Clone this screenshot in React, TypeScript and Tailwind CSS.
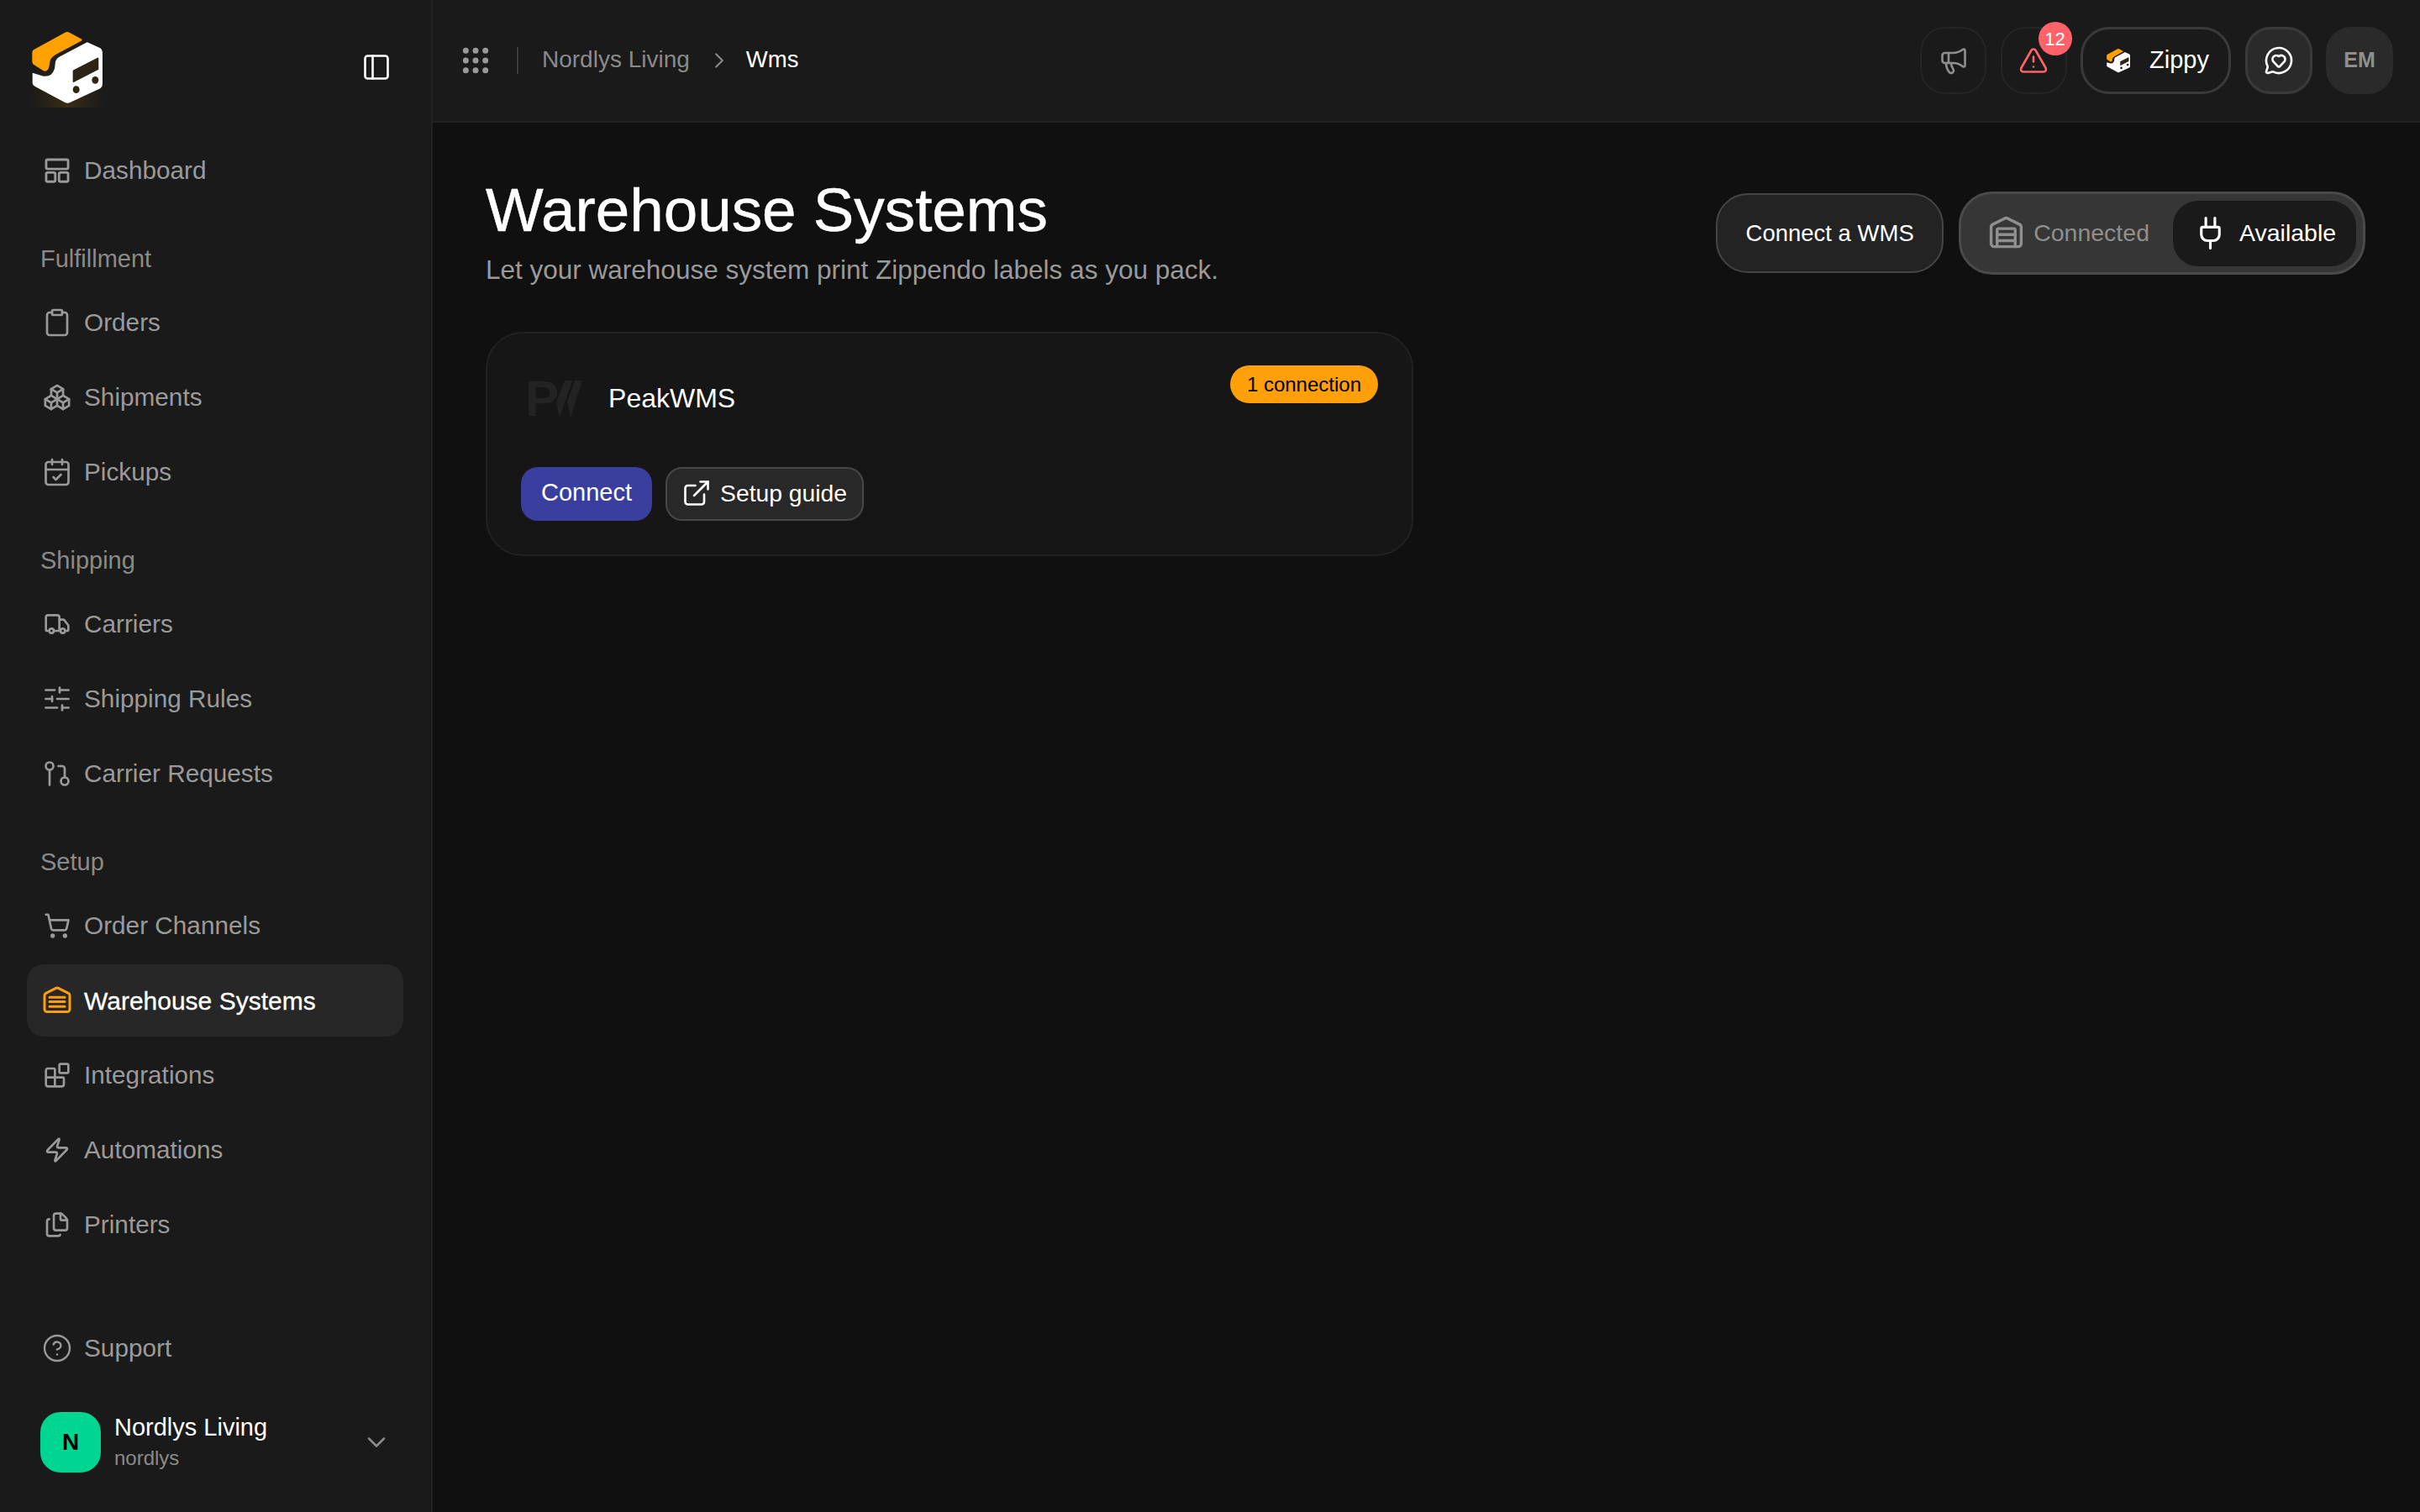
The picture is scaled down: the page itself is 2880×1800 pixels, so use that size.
import React from 'react';
import {
  Blocks,
  CalendarCheck,
  ChevronDown,
  ChevronRight,
  CircleHelp,
  Clipboard,
  ExternalLink,
  Files,
  GitPullRequest,
  Grip,
  Megaphone,
  MessageCircleHeart,
  PanelLeft,
  Plug,
  ShoppingCart,
  SlidersHorizontal,
  TriangleAlert,
  Truck,
  Warehouse,
  Zap,
} from 'lucide-react';
import { TbPackages } from 'react-icons/tb';

const Logo = ({ className }: { className: string }) => (
  <svg viewBox="36 36 288 288" className={className}>
    <path
      d="M60 118 L172 56 Q180 52 188 56 L232 80 Q234 84 230 86 L140 134 Q120 146 118 160 L116 175 Q112 198 95 193 L62 172 Q55 168 55 160 L55 128 Q55 121 60 118Z"
      fill="#ffa200"
    />
    <path
      d="M255 92 L298 112 Q306 118 306 126 L306 240 Q306 250 298 256 L190 306 Q182 310 172 306 L64 248 Q56 244 56 236 L56 200 L95 212 Q125 216 135 185 L138 160 Q140 150 150 144 L248 92 Q252 90 255 92Z"
      fill="#ffffff"
    />
    <path d="M203 190 L288 146 Q292 145 292 149 L292 188 L203 234 Q200 235 200 232 L200 194 Q200 191 203 190Z" fill="#2c2415" />
    <ellipse cx="212" cy="260" rx="12" ry="13" fill="#2c2415" />
    <ellipse cx="280" cy="226" rx="12" ry="13" fill="#2c2415" />
  </svg>
);

const DashboardIcon = ({ className }: { className: string }) => (
  <svg viewBox="0 0 24 24" fill="none" stroke="currentColor" strokeWidth="1.9" className={className}>
    <rect x="3.3" y="3.3" width="17.4" height="7.4" rx="1.2" />
    <rect x="3.3" y="13.6" width="7.2" height="7.2" rx="1.2" />
    <rect x="13.5" y="13.6" width="7.2" height="7.2" rx="1.2" />
  </svg>
);

const WarehouseLinesIcon = ({ className }: { className: string }) => (
  <svg viewBox="0 0 24 24" fill="none" stroke="currentColor" strokeWidth="2" strokeLinecap="round" strokeLinejoin="round" className={className}>
    <path d="M22 19a2 2 0 0 1-2 2H4a2 2 0 0 1-2-2V8a2 2 0 0 1 1.132-1.803l7.95-3.974a2 2 0 0 1 1.837 0l7.95 3.974A2 2 0 0 1 22 8z" />
    <path d="M6 9.5h12" />
    <path d="M6 13h12" />
    <path d="M6 16.8h12" />
  </svg>
);

const big = 'w-9 h-9';
const small = 'w-8 h-8';

const sections = [
  {
    label: null,
    items: [{ name: 'Dashboard', icon: <DashboardIcon className={big} /> }],
  },
  {
    label: 'Fulfillment',
    items: [
      { name: 'Orders', icon: <Clipboard className={big} strokeWidth={1.8} /> },
      { name: 'Shipments', icon: <TbPackages className="w-[34px] h-[34px]" strokeWidth={1.9} /> },
      { name: 'Pickups', icon: <CalendarCheck className={big} strokeWidth={1.8} /> },
    ],
  },
  {
    label: 'Shipping',
    items: [
      { name: 'Carriers', icon: <Truck className={small} strokeWidth={2} /> },
      { name: 'Shipping Rules', icon: <SlidersHorizontal className={big} strokeWidth={1.8} /> },
      { name: 'Carrier Requests', icon: <GitPullRequest className={big} strokeWidth={1.8} /> },
    ],
  },
  {
    label: 'Setup',
    items: [
      { name: 'Order Channels', icon: <ShoppingCart className={small} strokeWidth={2} /> },
      { name: 'Warehouse Systems', icon: <WarehouseLinesIcon className={`${big} text-[#ff9f0a]`} />, active: true },
      { name: 'Integrations', icon: <Blocks className={small} strokeWidth={2} /> },
      { name: 'Automations', icon: <Zap className={small} strokeWidth={2} /> },
      { name: 'Printers', icon: <Files className={small} strokeWidth={2} /> },
    ],
  },
];

const NavRow = ({ name, icon, active }: { name: string; icon: React.ReactNode; active?: boolean }) => (
  <div
    className={`flex items-center gap-[14px] h-[86px] pl-[18px] rounded-[20px] ${
      active ? 'bg-[#272727] text-white text-[30px] [-webkit-text-stroke:0.3px_white]' : 'text-[#9a9a9a] text-[29.75px]'
    }`}
  >
    <span className="w-9 h-9 shrink-0 flex items-center justify-center">{icon}</span>
    <span>{name}</span>
  </div>
);

const Sidebar = () => (
  <aside className="w-[515px] shrink-0 flex flex-col h-full bg-[#1a1a1a] border-r-2 border-[#232323] pl-[32px] pr-[33px] pb-[46px]">
    <div className="flex items-start justify-between h-[160px] pt-[32px]">
      <div className="w-[96px] h-[96px] bg-[radial-gradient(ellipse_at_50%_100%,_#3a2c14_0%,_#1a1a1a_65%)]">
        <Logo className="w-[96px] h-[96px]" />
      </div>
      <PanelLeft className="w-9 h-9 mt-[30px] mr-[14px] text-white" strokeWidth={1.75} />
    </div>
    {sections.map((section) => (
      <div key={section.label ?? 'top'}>
        {section.label && (
          <div className="mt-[42px] mb-[13px] h-[40px] leading-[40px] pl-[16px] text-[29px] text-[#8a8a8a]">{section.label}</div>
        )}
        <div className="flex flex-col gap-[3px]">
          {section.items.map((item) => (
            <NavRow key={item.name} {...item} />
          ))}
        </div>
      </div>
    ))}
    <div className="mt-auto">
      <NavRow name="Support" icon={<CircleHelp className={big} strokeWidth={1.6} />} />
      <div className="flex items-center mt-[32px] pl-[16px]">
        <div className="w-[72px] h-[72px] rounded-[24px] bg-[#00d692] flex items-center justify-center text-black text-[28px] font-bold">N</div>
        <div className="ml-[16px] flex flex-col">
          <span className="text-[29px] leading-[38px] text-white">Nordlys Living</span>
          <span className="text-[24px] leading-[36px] text-[#8a8a8a]">nordlys</span>
        </div>
        <ChevronDown className="w-9 h-9 ml-auto mr-[14px] text-[#8a8a8a]" strokeWidth={1.75} />
      </div>
    </div>
  </aside>
);

const Topbar = () => (
  <header className="flex items-center h-[146px] shrink-0 bg-[#1a1a1a] border-b-2 border-[#232323] pl-[31px] pr-[32px]">
    <Grip className="w-10 h-10 text-[#9a9a9a]" strokeWidth={2.2} />
    <div className="w-[2px] h-[32px] bg-[#3a3a3a] ml-[29px]" />
    <span className="ml-[28px] -mt-[2px] text-[28px] text-[#8a8a8a]">Nordlys Living</span>
    <ChevronRight className="w-[30px] h-[30px] ml-[20px] mr-[17px] text-[#8a8a8a]" strokeWidth={1.75} />
    <span className="-mt-[2px] text-[27.5px] text-white">Wms</span>
    <div className="ml-auto flex items-center gap-[16.5px]">
      <div className="w-[79px] h-[80px] rounded-[30px] border-2 border-[#252525] flex items-center justify-center text-[#8f8f8f]">
        <Megaphone className="w-9 h-9" strokeWidth={1.75} />
      </div>
      <div className="relative w-[79px] h-[80px] rounded-[30px] border-2 border-[#252525] flex items-center justify-center text-[#ff6369]">
        <TriangleAlert className="w-9 h-9" strokeWidth={1.75} />
        <div className="absolute -top-[8px] -right-[8px] w-[40px] h-[40px] rounded-full bg-[#ff6369] flex items-center justify-center text-white text-[22px]">12</div>
      </div>
      <div className="w-[179px] h-[80px] rounded-[34px] border-[3px] border-[#3a3a3a] flex items-center pl-[26px] text-white text-[29px]">
        <Logo className="w-[32px] h-[32px]" />
        <span className="ml-[21px]">Zippy</span>
      </div>
      <div className="w-[80px] h-[80px] rounded-[30px] bg-[#2a2a2a] border-[3px] border-[#3a3a3a] flex items-center justify-center text-white">
        <MessageCircleHeart className="w-9 h-9" strokeWidth={1.75} />
      </div>
      <div className="w-[80px] h-[80px] rounded-[30px] bg-[#2a2a2a] flex items-center justify-center text-[#8f8f8f] text-[25px] font-bold">EM</div>
    </div>
  </header>
);

const PeakCard = () => (
  <div className="mt-[54px] w-[1104px] h-[267px] rounded-[44px] bg-[#161616] border-2 border-[#222222] p-[40px] flex flex-col">
    <div className="flex items-start justify-between h-[76px]">
      <div className="flex items-center mt-[15px]">
        <span className="ml-[5px] -mr-[6px] text-[60px] leading-[44px] font-bold text-[#232323]">P</span>
        <svg viewBox="0 0 34 44" className="w-[34px] h-[44px]" fill="#232323">
          <path d="M13 0h9L7 44 3 26z" />
          <path d="M25 0h9L20 44l-4-18z" />
        </svg>
        <span className="ml-[31px] -mt-[2px] text-[32px] text-white">PeakWMS</span>
      </div>
      <div className="h-[45px] -mt-[2px] px-[20px] rounded-full bg-[#ff9f0a] flex items-center text-black text-[24px]">1 connection</div>
    </div>
    <div className="mt-auto flex items-center gap-[16px]">
      <div className="h-[64px] px-[24px] pb-[2px] rounded-[20px] bg-[#3a3f9f] flex items-center text-white text-[29px]">Connect</div>
      <div className="h-[64px] pl-[17px] pr-[18px] pb-[2px] rounded-[20px] bg-[#282828] border-2 border-[#474747] flex items-center gap-[10px] text-white text-[28.3px]">
        <ExternalLink className="w-9 h-9" strokeWidth={1.75} />
        <span>Setup guide</span>
      </div>
    </div>
  </div>
);

export default function App() {
  return (
    <div
      className="flex w-[2880px] h-[1800px] overflow-hidden bg-[#101010]"
      style={{ fontFamily: '"Liberation Sans", Arial, sans-serif' }}
    >
      <Sidebar />
      <div className="flex-1 flex flex-col min-w-0">
        <Topbar />
        <main className="flex-1 pt-[61px] pl-[63px] pr-[65px]">
          <div className="flex items-start justify-between">
            <div>
              <h1 className="text-[72.8px] leading-[86px] text-white [-webkit-text-stroke:0.5px_white]">Warehouse Systems</h1>
              <p className="mt-[8px] text-[31.5px] leading-[40px] text-[#9a9a9a]">Let your warehouse system print Zippendo labels as you pack.</p>
            </div>
            <div className="flex items-center gap-[18px] mt-[21px]">
              <div className="w-[271px] h-[95px] rounded-[38px] bg-[#232323] border-2 border-[#454545] flex items-center justify-center text-white text-[27.5px]">Connect a WMS</div>
              <div className="h-[99px] rounded-[40px] bg-[#363636] border-[3px] border-[#4a4a4a] flex items-center pl-[10px] pr-[8px]">
                <div className="flex items-center gap-[11px] pl-[22px] pr-[28px] text-[#8f8f8f] text-[28.5px]">
                  <Warehouse className="w-[43px] h-[43px]" strokeWidth={1.9} />
                  <span>Connected</span>
                </div>
                <div className="flex items-center gap-[13px] h-[78px] w-[218px] pl-[23px] rounded-[30px] bg-[#1a1a1a] text-white text-[28.5px]">
                  <Plug className="w-[43px] h-[43px]" strokeWidth={1.75} />
                  <span>Available</span>
                </div>
              </div>
            </div>
          </div>
          <PeakCard />
        </main>
      </div>
    </div>
  );
}
